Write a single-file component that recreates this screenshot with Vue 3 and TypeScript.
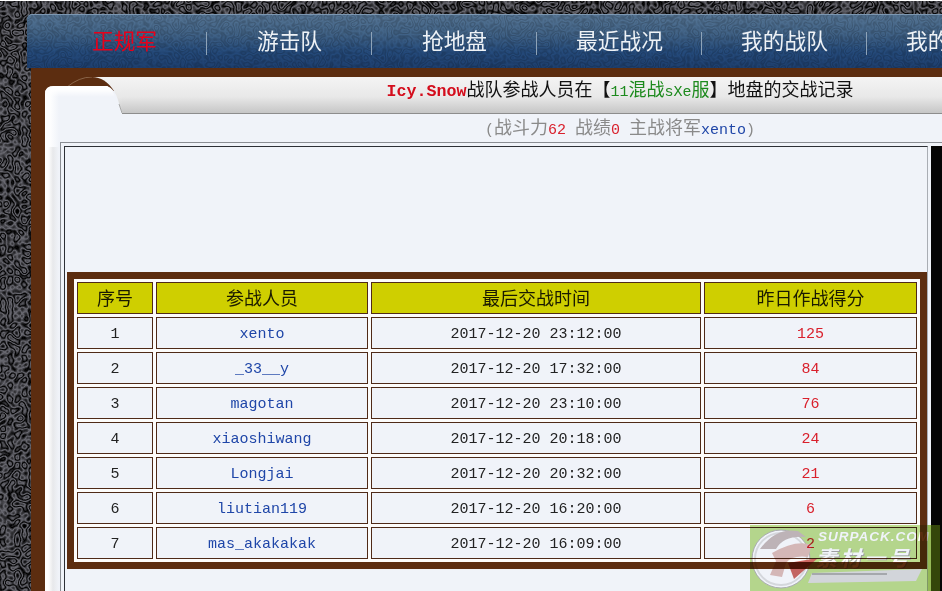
<script setup lang="ts">
interface Row { no: number; name: string; time: string; score: number }
const tabs = ['正规军', '游击队', '抢地盘', '最近战况', '我的战队', '我的战绩']
const rows: Row[] = [
  { no: 1, name: 'xento', time: '2017-12-20 23:12:00', score: 125 },
  { no: 2, name: '_33__y', time: '2017-12-20 17:32:00', score: 84 },
  { no: 3, name: 'magotan', time: '2017-12-20 23:10:00', score: 76 },
  { no: 4, name: 'xiaoshiwang', time: '2017-12-20 20:18:00', score: 24 },
  { no: 5, name: 'Longjai', time: '2017-12-20 20:32:00', score: 21 },
  { no: 6, name: 'liutian119', time: '2017-12-20 16:20:00', score: 6 },
  { no: 7, name: 'mas_akakakak', time: '2017-12-20 16:09:00', score: 2 },
]
</script>

<template>
  <div class="page">
    <svg class="texture" width="942" height="591" aria-hidden="true">
      <filter id="worm" x="0" y="0" width="100%" height="100%" color-interpolation-filters="sRGB">
        <feTurbulence type="fractalNoise" baseFrequency="0.14" numOctaves="1" seed="4" />
        <feColorMatrix type="matrix" values="0 0 0 0 0  0 0 0 0 0  0 0 0 0 0  1.7 0 0 0 -0.35" />
        <feComponentTransfer>
          <feFuncA type="table" tableValues="1 0 1 0 1 0 1" />
        </feComponentTransfer>
      </filter>
      <rect width="942" height="591" fill="#6a6a72" />
      <rect width="942" height="591" fill="#17171d" filter="url(#worm)" />
    </svg>

    <div class="site">
      <nav class="nav">
        <svg class="nav-tex" width="915" height="54" aria-hidden="true">
          <filter id="wormBlue" x="0" y="0" width="100%" height="100%" color-interpolation-filters="sRGB">
            <feTurbulence type="fractalNoise" baseFrequency="0.15" numOctaves="1" seed="9" />
            <feColorMatrix type="matrix" values="0 0 0 0 0  0 0 0 0 0  0 0 0 0 0  1.7 0 0 0 -0.35" />
            <feComponentTransfer>
              <feFuncA type="table" tableValues="0.2 0 0.2 0 0.2 0 0.2" />
            </feComponentTransfer>
          </filter>
          <rect width="915" height="54" fill="#dbe6f2" filter="url(#wormBlue)" />
        </svg>
        <a v-for="(t, i) in tabs" :key="t" class="nav-item" :class="{ active: i === 0 }">{{ t }}</a>
      </nav>

      <div class="body">
        <div class="panel">
          <div class="head">
            <svg class="corner" width="77" height="37" viewBox="0 0 77 37" aria-hidden="true">
              <defs>
                <linearGradient id="bar" x1="0" y1="0" x2="0" y2="1">
                  <stop offset="0" stop-color="#f4f4f4" />
                  <stop offset="0.55" stop-color="#e8e8e8" />
                  <stop offset="1" stop-color="#c6c6c6" />
                </linearGradient>
                <linearGradient id="leaf" gradientUnits="userSpaceOnUse" x1="0" y1="0" x2="14" y2="0">
                  <stop offset="0" stop-color="#fff" />
                  <stop offset="0.3" stop-color="#fff" />
                  <stop offset="1" stop-color="#f0f3f9" />
                </linearGradient>
                <linearGradient id="band" gradientUnits="userSpaceOnUse" x1="0" y1="9" x2="0" y2="20">
                  <stop offset="0.3" stop-color="#fff" />
                  <stop offset="1" stop-color="#fff" stop-opacity="0" />
                </linearGradient>
              </defs>
              <rect width="77" height="37" fill="#5c2d10" />
              <path d="M47 0 H77 V37 H45 Z" fill="url(#bar)" />
              <path d="M22 10 Q34 0 47 0 Q60 0 69 14 L60 14 Z" fill="#5c2d10" />
              <path d="M22 10 Q34 0 47 0" fill="none" stroke="#a98a70" stroke-width="1" opacity="0.6" />
              <path d="M0 37 V17 Q0 9 9 9 H62 Q70 12 73 23 L77 36 V37 Z" fill="url(#leaf)" />
              <path d="M0 20 V17 Q0 9 9 9 H62 Q67 11 70 20 Z" fill="url(#band)" />
              <path d="M74 27 L77 36" fill="none" stroke="#a8a8a8" stroke-width="1" />
            </svg>
            <h1 class="title"><b class="lat team">Icy.Snow</b>战队参战人员在【<span class="green"><span class="lat">11</span>混战<span class="lat">sXe</span>服</span>】地盘的交战记录</h1>
          </div>

          <p class="sub"><span class="lat">(</span>战斗力<span class="red lat">62</span><span class="lat">&nbsp;</span>战绩<span class="red lat">0</span><span class="lat">&nbsp;</span>主战将军<span class="blue lat">xento</span><span class="lat">)</span></p>

          <div class="frame">
            <div class="box">
              <table class="grid">
                <colgroup>
                  <col class="c1" /><col class="c2" /><col class="c3" /><col class="c4" />
                </colgroup>
                <thead>
                  <tr><th>序号</th><th>参战人员</th><th>最后交战时间</th><th>昨日作战得分</th></tr>
                </thead>
                <tbody>
                  <tr v-for="r in rows" :key="r.no">
                    <td class="lat">{{ r.no }}</td>
                    <td class="lat blue">{{ r.name }}</td>
                    <td class="lat">{{ r.time }}</td>
                    <td class="lat red">{{ r.score }}</td>
                  </tr>
                </tbody>
              </table>
            </div>
            <div class="black"></div>
          </div>
        </div>
      </div>
    </div>

    <div class="mark" aria-hidden="true">
      <svg width="190" height="66" viewBox="0 0 190 66">
        <ellipse cx="31" cy="34" rx="29" ry="29" fill="#fff" stroke="#b5b5b5" stroke-width="1" />
        <ellipse cx="31" cy="34" rx="26" ry="26" fill="none" stroke="#e2e2e2" stroke-width="2" />
        <path d="M10 24 Q26 2 48 6 L56 12 Q34 10 26 24 Z" fill="#c9bcbc" />
        <path d="M22 28 Q46 14 62 20 L58 32 Q42 30 36 38 L32 52 L20 50 L26 36 Z" fill="#e2c0bc" />
        <path d="M38 38 L68 33 L44 54 Z" fill="#d06a64" />
        <path d="M62 48 L172 44 L166 56 L58 58 Z" fill="#e0e0e0" />
        <rect x="62" y="48" width="75" height="2" fill="#b0b0b0" />
      </svg>
      <span class="mark-url">SURPACK.COM</span>
      <span class="mark-cn">素材一号</span>
    </div>
    <div class="mark-tint" aria-hidden="true"></div>
  </div>
</template>

<style>
html, body { margin: 0; background: #fff; }
</style>

<style scoped>
.page {
  position: relative;
  width: 942px;
  height: 591px;
  overflow: hidden;
  box-sizing: border-box;
  padding: 14px 0 0 27px;
  font-family: "Liberation Mono", "Noto Sans CJK SC", monospace;
  font-size: 18px;
  color: #111;
}
.texture { position: absolute; left: 0; top: 1px; }
.site { position: relative; width: 1300px; }
.nav {
  position: relative;
  display: flex;
  height: 54px;
  padding-left: 15px;
  border-radius: 5px 0 0 0;
  border-top: 1px solid #7c97b2;
  box-sizing: border-box;
  background: linear-gradient(#557595 0%, #426488 35%, #254b7c 70%, #1e4070 100%);
  overflow: hidden;
  font-family: "Noto Sans CJK SC", sans-serif;
}
.nav-tex { position: absolute; left: 0; top: 0; }
.nav-item {
  position: relative;
  width: 165px;
  flex: none;
  display: flex;
  align-items: center;
  justify-content: center;
  padding-bottom: 4px;
  box-sizing: border-box;
  font-size: 21.7px;
  color: #eef2f6;
  background: linear-gradient(#8ea3b8, #8ea3b8) right 17px / 1px 23px no-repeat;
}
.nav-item.active { color: #e8001a; }
.body {
  margin-left: 4px;
  padding: 9px 0 0 14px;
  height: 523px;
  box-sizing: border-box;
  background: #5c2d10;
}
.panel {
  width: 1150px;
  height: 514px;
  background:
    linear-gradient(90deg, transparent 3px, rgba(0, 0, 0, 0.07) 8px, transparent 14px) 0 70px / 100% 100% no-repeat,
    linear-gradient(90deg, #fff 0, #fff 4px, #f0f3f9 14px);
  font-family: "Noto Sans CJK SC", sans-serif;
}
.head { display: flex; height: 37px; }
.corner { flex: none; display: block; }
.title {
  flex: 1;
  margin: 0;
  padding-right: 77px;
  height: 37px;
  box-sizing: border-box;
  border-bottom: 1px solid #8d8d8d;
  background: linear-gradient(#f4f4f4, #e8e8e8 55%, #c6c6c6);
  font-size: 18px;
  font-weight: 400;
  line-height: 23px;
  text-align: center;
  color: #111;
}
.lat { font-family: "Liberation Mono", monospace; font-size: 15px; }
.team { font-size: 16.67px; font-weight: 700; color: #d40d1c; }
.title .green { color: #1d8a1d; }
.sub {
  margin: 0;
  height: 28px;
  line-height: 24px;
  text-align: center;
  color: #8a8a8a;
  white-space: pre;
}
.red { color: #d9202c; }
.blue { color: #1f46a8; }
.frame {
  display: flex;
  gap: 3px;
  margin-left: 15px;
  padding: 3px 0 0 3px;
  border-top: 1px solid #8a8d93;
  border-left: 1px solid #8a8d93;
}
.box {
  flex: none;
  width: 864px;
  height: 450px;
  box-sizing: border-box;
  padding: 125px 0 0 2px;
  border-top: 1px solid #2d3036;
  border-left: 1px solid #2d3036;
  border-right: 1px solid #a9adb4;
}
.black { flex: none; width: 200px; height: 450px; background: #050505; }
.grid {
  width: 860px;
  table-layout: fixed;
  border-collapse: separate;
  border-spacing: 3px;
  border: 7px solid #5c2d10;
  background: #fdfcfb;
  font-family: "Liberation Mono", "Noto Sans CJK SC", monospace;
}
.c1 { width: 76px; }
.c2 { width: 212px; }
.c3 { width: 330px; }
.c4 { width: 213px; }
.grid th, .grid td {
  height: 32px;
  padding: 0;
  box-sizing: border-box;
  border: 1px solid #4f2a18;
  text-align: center;
  white-space: nowrap;
}
.grid th {
  padding-bottom: 3px;
  background: #cfcf00;
  font-family: "Noto Sans CJK SC", sans-serif;
  font-size: 18px;
  font-weight: 400;
  color: #1a1a00;
}
.grid td { padding-top: 2px; background: #f0f3f9; color: #222; }
.grid td.blue { color: #1f46a8; }
.grid td.red { color: #d9202c; }
.mark {
  position: absolute;
  left: 750px;
  top: 525px;
  width: 190px;
  height: 66px;
  overflow: hidden;
  background: #bfe08f;
  mix-blend-mode: multiply;
  font-family: "Liberation Sans", "Noto Sans CJK SC", sans-serif;
}
.mark-tint {
  position: absolute;
  left: 928px;
  top: 525px;
  width: 12px;
  height: 66px;
  background: rgba(110, 150, 20, 0.45);
}
.mark svg { position: absolute; left: 0; top: 0; }
.mark-url {
  position: absolute;
  left: 68px;
  top: 5px;
  font-size: 13.5px;
  line-height: 14px;
  font-weight: 700;
  font-style: italic;
  letter-spacing: 1px;
  color: #fff;
  white-space: nowrap;
}
.mark-cn {
  position: absolute;
  left: 66px;
  top: 22px;
  font-size: 21px;
  line-height: 24px;
  font-weight: 700;
  font-style: italic;
  color: #fff;
  letter-spacing: 3px;
  text-shadow: 1px 1px 0 #a8a8a8;
  white-space: nowrap;
}
</style>
